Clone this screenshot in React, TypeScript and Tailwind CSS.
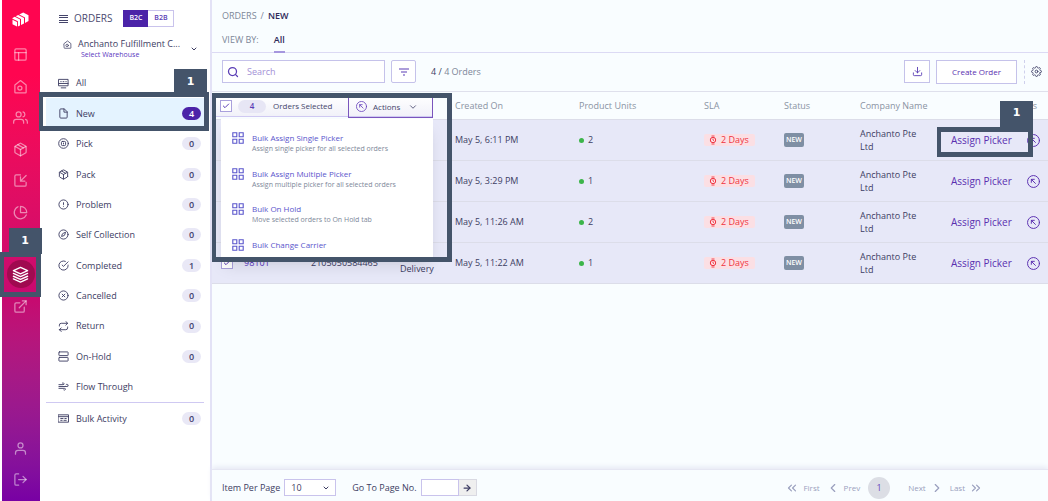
import React from 'react';
import {
  ArrowRight,
  Check,
  ChevronDown,
  ChevronLeft,
  ChevronRight,
  ChevronsLeft,
  ChevronsRight,
  CircleX,
  Compass,
  Search,
  Wind,
} from 'lucide-react';
import {
  FiAlertCircle,
  FiCheckCircle,
  FiDownload,
  FiExternalLink,
  FiFile,
  FiLayout,
  FiLogOut,
  FiPackage,
  FiPieChart,
  FiRepeat,
  FiSettings,
  FiUser,
  FiUsers,
} from 'react-icons/fi';

type IconProps = { className?: string };

const svgProps = {
  viewBox: '0 0 24 24',
  fill: 'none',
  stroke: 'currentColor',
  strokeWidth: 2,
  strokeLinecap: 'round' as const,
  strokeLinejoin: 'round' as const,
};

const LogoIcon = ({ className }: IconProps) => (
  <svg className={className} viewBox="0 0 17 17" fill="#fff">
    <path d="M.5 6.900 2.800 5.800 8 8.400V14.400L5.900 15.600V10.200L.5 7.700ZM.5 8.800 5 10.900V15.600L.5 13.300Z" />
    <path d="M3.700 5.300 6.200 4.100 12 7V12.400L9 14V8Z" />
    <path d="M7.200 3.600 11.200 1.600 16.500 4.300V10L13 11.900V6.500Z" />
  </svg>
);

const HouseIcon = ({ className }: IconProps) => (
  <svg className={className} {...svgProps}>
    <path d="M3 9.500 12 2.500l9 7V21a1 1 0 0 1-1 1H4a1 1 0 0 1-1-1Z" />
    <circle cx="11" cy="14.500" r="3.300" />
  </svg>
);

const InboundIcon = ({ className }: IconProps) => (
  <svg className={className} {...svgProps}>
    <path d="M12 3H5a2 2 0 0 0-2 2v14a2 2 0 0 0 2 2h14a2 2 0 0 0 2-2v-4M21 4l-9 9M12 6v7h7" />
  </svg>
);

const LayersIcon = ({ className }: IconProps) => (
  <svg className={className} {...svgProps}>
    <path d="m12 2 10 4.500-10 4.500L2 6.500ZM2 10.500 12 15l10-4.500M2 14.500 12 19l10-4.500M2 18.200l10 4.500 10-4.500" />
  </svg>
);

const ScreenIcon = ({ className }: IconProps) => (
  <svg className={className} {...svgProps}>
    <path d="M2 3h20v14H2ZM6 8h1M11 8h2M17 8h1M2 12h20M7 21.500h10" />
  </svg>
);

const PickIcon = ({ className }: IconProps) => (
  <svg className={className} {...svgProps}>
    <circle cx="12" cy="12" r="10.500" />
    <rect x="7.500" y="7.500" width="9" height="9" rx="2" />
    <path d="M12 11v2" />
  </svg>
);

const HoldIcon = ({ className }: IconProps) => (
  <svg className={className} {...svgProps}>
    <rect x="2" y="2" width="20" height="8" rx="1" />
    <rect x="2" y="14" width="20" height="8" rx="1" />
  </svg>
);

const BulkIcon = ({ className }: IconProps) => (
  <svg className={className} {...svgProps}>
    <path d="M1 4h22v16H1ZM1 8h22M6 12h5M15 12h3M6 16h3M13 16h5" />
  </svg>
);

const GridIcon = ({ className }: IconProps) => (
  <svg className={className} viewBox="0 0 12 12" fill="none" stroke="currentColor" strokeWidth="1.100">
    <path d="M.8.800h4v4h-4ZM7.200.800h4v4h-4ZM.8 7.200h4v4h-4ZM7.200 7.200h4v4h-4Z" />
  </svg>
);

const ActionIcon = ({ className }: IconProps) => (
  <svg className={className} {...svgProps} strokeWidth="1.800">
    <circle cx="12" cy="12" r="11" />
    <path d="M8 13.500V8h5.500M8 8l7.500 7.500" />
  </svg>
);

const ClockIcon = ({ className }: IconProps) => (
  <svg className={className} viewBox="0 0 8 10" fill="none" stroke="currentColor">
    <circle cx="4" cy="5" r="2.700" />
    <path d="M4 3.500V5l1 .7M2.500 1h3M2.500 9h3" strokeWidth=".9" />
  </svg>
);

const FilterIcon = ({ className }: IconProps) => (
  <svg className={className} viewBox="0 0 10 8" stroke="currentColor" strokeWidth="1.200">
    <path d="M0 1h10M2 4h6M4 7h2" />
  </svg>
);

const railItems = [
  { label: 'Dashboard', icon: FiLayout },
  { label: 'Warehouse', icon: HouseIcon },
  { label: 'Customers', icon: FiUsers },
  { label: 'Products', icon: FiPackage },
  { label: 'Inbound', icon: InboundIcon },
  { label: 'Reports', icon: FiPieChart },
];

const tabs = [
  { label: 'All', icon: ScreenIcon },
  { label: 'New', icon: FiFile, count: 4, active: true },
  { label: 'Pick', icon: PickIcon, count: 0 },
  { label: 'Pack', icon: FiPackage, count: 0 },
  { label: 'Problem', icon: FiAlertCircle, count: 0 },
  { label: 'Self Collection', icon: Compass, count: 0 },
  { label: 'Completed', icon: FiCheckCircle, count: 1 },
  { label: 'Cancelled', icon: CircleX, count: 0 },
  { label: 'Return', icon: FiRepeat, count: 0 },
  { label: 'On-Hold', icon: HoldIcon, count: 0 },
  { label: 'Flow Through', icon: Wind },
];

const bulkActions = [
  { title: 'Bulk Assign Single Picker', text: 'Assign single picker for all selected orders' },
  { title: 'Bulk Assign Multiple Picker', text: 'Assign multiple picker for all selected orders' },
  { title: 'Bulk On Hold', text: 'Move selected orders to On Hold tab' },
  { title: 'Bulk Change Carrier' },
];

const orders = [
  { created: 'May 5, 6:11 PM', units: 2 },
  { created: 'May 5, 3:29 PM', units: 1 },
  { created: 'May 5, 11:26 AM', units: 2 },
  { id: '98101', tracking: '2105050584465', type: 'Delivery', created: 'May 5, 11:22 AM', units: 1 },
];

const Step = ({ className }: IconProps) => (
  <span
    className={`absolute z-30 flex h-[26px] w-[33px] items-center justify-center bg-[#44546a] font-['DejaVu_Sans',sans-serif] text-[11px] font-bold text-white ${className}`}
  >
    1
  </span>
);

const Frame = ({ className }: IconProps) => (
  <span className={`pointer-events-none absolute z-20 border-[5px] border-l-4 border-[#44546a] ${className}`} />
);

const Tick = ({ label }: { label: string }) => (
  <span className="relative flex size-3 shrink-0">
    <input
      type="checkbox"
      defaultChecked
      aria-label={label}
      className="size-3 appearance-none border border-[#a9a0dc] bg-white"
    />
    <Check className="pointer-events-none absolute left-0.5 top-0.5 size-2 text-[#5a3db5]" strokeWidth={3} />
  </span>
);

const Count = ({ value, active }: { value: number; active?: boolean }) => (
  <span
    className={`flex h-[13px] w-[19px] items-center justify-center rounded-full font-semibold ${
      active ? 'bg-[#4b23a8] text-white' : 'bg-[#e9e8f6] text-[#41416e]'
    }`}
  >
    {value}
  </span>
);

const Rail = () => (
  <nav className="ml-0.5 flex w-[38px] shrink-0 flex-col items-center bg-linear-to-b from-[#ff0550] from-15% via-[#c60a70] via-60% to-[#7800a4] pb-3.5 pr-px">
    <a href="#" aria-label="Home" className="flex h-[39px] items-center">
      <LogoIcon className="size-[17px]" />
    </a>
    {railItems.map(({ label, icon: Icon }) => (
      <a key={label} href="#" aria-label={label} className="flex h-8 items-center text-white/50 even:h-[31px]">
        <Icon className="size-[15px]" />
      </a>
    ))}
    <a
      href="#"
      aria-label="Orders"
      className="relative mt-8 flex size-7 items-center justify-center rounded-full bg-[#a00a50] text-white"
    >
      <LayersIcon className="size-[17px]" />
      <Frame className="-left-[7px] -top-2 h-[45px] w-[41px]" />
      <Step className="-top-8 left-0.5" />
    </a>
    <a href="#" aria-label="Open store" className="flex h-9 items-center text-white/50">
      <FiExternalLink className="size-[15px]" />
    </a>
    <div className="mt-auto flex flex-col gap-4 text-white/50">
      <a href="#" aria-label="Profile"><FiUser className="size-[15px]" /></a>
      <a href="#" aria-label="Log out"><FiLogOut className="size-[15px]" /></a>
    </div>
  </nav>
);

const Sidebar = () => (
  <aside className="w-[172px] shrink-0 border-r-2 border-[#e3e2f6] px-1.5 text-[9px] text-[#3d3d63]">
    <div className="flex h-[37px] items-center pl-[13px]">
      <svg className="mr-1.5 h-2.5 w-[9px]" viewBox="0 0 9 10" stroke="#44446a">
        <path d="M0 1.500h9M0 3.500h9M0 6.500h9M0 8.500h9" />
      </svg>
      <h1 className="text-[10px] text-[#4b4b70]">ORDERS</h1>
      <div className="ml-[11px] flex h-[17px] w-[51px] border border-[#c9c3ec] text-[7px] font-semibold">
        <button className="-my-px -ml-px flex-1 bg-[#4b23a8] text-white">B2C</button>
        <button className="flex-1 text-[#5a3db5]">B2B</button>
      </div>
    </div>
    <button className="flex h-[31px] w-full items-start pl-[17px] text-left">
      <HouseIcon className="mr-1.5 mt-[3px] size-[9px]" />
      <span className="flex-1 leading-[14px]">
        {'Anchanto Fulfillment C...'}
        <span className="block pl-[3px] text-[7px] leading-2 text-[#5a35c0]">Select Warehouse</span>
      </span>
      <ChevronDown className="mr-1.5 mt-2 size-2" strokeWidth={3} />
    </button>
    <ul className="grid h-[334px] auto-rows-fr">
      {tabs.map(({ label, icon: Icon, count, active }) => (
        <li key={label} className={active ? 'relative bg-[#e4f3ff]' : ''}>
          <a href="#" className="flex h-full items-center pl-3 pr-[3px]">
            <Icon className="mr-[7px] size-[11px]" />
            <span className="flex-1">{label}</span>
            {count !== undefined && <Count value={count} active={active} />}
          </a>
          {active && (
            <>
              <Frame className="-left-[7px] -top-1.5 h-[39px] w-[170px]" />
              <Step className="-top-[29px] right-[-3px]" />
            </>
          )}
        </li>
      ))}
    </ul>
    <a href="#" className="flex h-8 items-center border-t border-[#cfc9f2] pl-3 pr-[3px]">
      <BulkIcon className="mr-[7px] size-[11px]" />
      <span className="flex-1">Bulk Activity</span>
      <Count value={0} />
    </a>
  </aside>
);

const Toolbar = () => (
  <div className="flex h-[39px] items-center border-b border-[#dfe0ec] pb-px pl-2.5 pr-1.5">
    <label className="flex h-[23px] w-[163px] items-center border border-[#c5c2ea] bg-white pl-1">
      <Search className="size-3 shrink-0 text-[#5a3db5]" strokeWidth={2.5} />
      <input
        type="search"
        aria-label="Search"
        placeholder="Search"
        className="ml-2 w-full outline-none placeholder:text-[#a391d6]"
      />
    </label>
    <button
      aria-label="Filter"
      className="ml-1.5 flex h-[23px] w-[25px] items-center justify-center rounded-xs border border-[#c5c2ea] bg-white"
    >
      <FilterIcon className="h-2 w-2.5 text-[#5a3db5]" />
    </button>
    <p className="ml-[15px] text-[#7d8799]">
      <span className="text-[#3d3d63]">4 /</span> 4 Orders
    </p>
    <button
      aria-label="Download"
      className="ml-auto flex h-[23px] w-[26px] items-center justify-center border border-[#c5c2ea] bg-white text-[#5a3db5]"
    >
      <FiDownload className="size-[11px]" />
    </button>
    <button className="ml-1.5 h-6 w-[81px] border border-[#c5c2ea] bg-white text-[8px] font-medium text-[#5a2fb0]">
      Create Order
    </button>
    <span className="ml-[7px] h-6 border-l border-dashed border-[#cfd0ec]" />
    <button aria-label="Settings" className="ml-1.5 text-[#44446a]">
      <FiSettings className="size-[11px]" />
    </button>
  </div>
);

const SelectionBar = () => (
  <div className="relative h-[27px] pl-1 pt-1">
    <div className="flex h-[21px] w-[217px] items-center border-b border-[#cfc9f2] bg-linear-to-b from-white to-[#f1f1f9] text-[8px] font-medium text-[#44446a]">
      <span className="pl-1"><Tick label="Select all orders" /></span>
      <span className="ml-1.5 flex h-[13px] w-7 items-center justify-center rounded-full bg-[#e7e6f5] font-semibold text-[#5a3db5]">
        4
      </span>
      <span className="ml-[7px]">Orders Selected</span>
      <button className="-mb-px ml-auto flex h-[22px] w-[85px] items-center border border-[#7a55bd] pl-[7px]">
        <ActionIcon className="mr-1.5 size-[11px] text-[#6a45bd]" />
        Actions
        <ChevronDown className="ml-2 size-2.5" />
      </button>
    </div>
    <ul className="absolute left-[9px] top-[27px] z-10 h-[140px] w-[212px] bg-white pt-3 shadow-lg">
      {bulkActions.map(({ title, text }) => (
        <li key={title} className="h-[35px] odd:h-9">
          <button className="flex w-full pl-[11px] text-left">
            <GridIcon className="mr-2 mt-px size-3 shrink-0 text-[#5a55cc]" />
            <span className="text-[8px] font-medium leading-[14px] text-[#5a55cc]">
              {title}
              {text && <span className="block text-[7px] font-normal leading-2 text-[#7d8799]">{text}</span>}
            </span>
          </button>
        </li>
      ))}
    </ul>
    <Frame className="left-0 top-px h-[169px] w-60" />
  </div>
);

const OrdersTable = () => (
  <table className="w-full table-fixed text-left">
    <colgroup>
      <col className="w-8" />
      <col className="w-[67px]" />
      <col className="w-[89px]" />
      <col className="w-[55px]" />
      <col className="w-[124px]" />
      <col className="w-[125px]" />
      <col className="w-20" />
      <col className="w-[76px]" />
      <col className="w-[91px]" />
      <col />
    </colgroup>
    <thead>
      <tr className="h-[27px] text-[#8a93a3] *:p-0 *:font-normal">
        <th colSpan={4}><SelectionBar /></th>
        <th>Created On</th>
        <th>Product Units</th>
        <th>SLA</th>
        <th>Status</th>
        <th>Company Name</th>
        <th><span className="block pr-[11px] text-right">Actions</span></th>
      </tr>
    </thead>
    <tbody>
      {orders.map((order, index) => (
        <tr key={order.created} className="h-[41px] border-t border-[#dcdde9] bg-[#e7e8f8] last:border-b *:p-0">
          <td><span className="flex pl-[9px]"><Tick label={`Select order ${index + 1}`} /></span></td>
          <td>{order.id && <a href="#" className="text-[#5a35c0]">{order.id}</a>}</td>
          <td>{order.tracking}</td>
          <td><span className="block pt-3">{order.type}</span></td>
          <td>{order.created}</td>
          <td>
            <span className="flex items-center gap-1">
              <span className="size-[5px] rounded-full bg-[#3cb54a]" />
              {order.units}
            </span>
          </td>
          <td>
            <span className="flex h-3 w-[51px] items-center rounded-xs bg-[#fbdfe4] pl-[5px] text-[#f03340]">
              <ClockIcon className="mr-1 h-2.5 w-2" />
              2 Days
            </span>
          </td>
          <td>
            <span className="flex h-3.5 w-5 items-center justify-center rounded-xs bg-[#7f8fa4] text-[7px] font-semibold text-white">
              NEW
            </span>
          </td>
          <td className="leading-[13px]"><span className="block w-[60px]">Anchanto Pte Ltd</span></td>
          <td>
            <div className="relative flex items-center justify-between pr-2 text-[#5a2fb0]">
              <button className="text-[10px]">Assign Picker</button>
              <button aria-label="More actions"><ActionIcon className="block size-[13px]" /></button>
              {index === 0 && (
                <>
                  <Frame className="-left-[14px] -top-1.5 h-[30px] w-24" />
                  <Step className="-top-8 left-[49px]" />
                </>
              )}
            </div>
          </td>
        </tr>
      ))}
    </tbody>
  </table>
);

const Footer = () => (
  <footer className="mt-auto flex h-8 items-center border-t border-[#e6e7f3] pl-2.5 pr-[65px] pt-1 shadow-[0_-2px_5px_#e6e8f4]">
    <label htmlFor="per-page" className="mr-1">Item Per Page</label>
    <span className="relative">
      <select
        id="per-page"
        className="block h-[17px] w-[52px] appearance-none border border-[#c9c3ec] bg-white pl-1.5 text-[9px]"
      >
        <option>10</option>
      </select>
      <ChevronDown className="pointer-events-none absolute right-1.5 top-[5px] size-2" strokeWidth={3} />
    </span>
    <label htmlFor="page-no" className="ml-4 mr-1">Go To Page No.</label>
    <input id="page-no" className="h-[17px] w-[38px] border border-[#c9c3ec] bg-white px-1" />
    <button
      aria-label="Go"
      className="flex h-[17px] w-[18px] items-center justify-center border border-l-0 border-[#d9d9e2] bg-[#efefef]"
    >
      <ArrowRight className="size-2.5" strokeWidth={3} />
    </button>
    <nav className="ml-auto flex items-center text-[8px] text-[#9a9fbe]">
      <a href="#" className="flex items-center gap-1"><ChevronsLeft className="size-3.5" />First</a>
      <a href="#" className="ml-1.5 flex items-center gap-1"><ChevronLeft className="size-3.5" />Prev</a>
      <a
        href="#"
        className="ml-2 mr-[18px] flex size-[22px] items-center justify-center rounded-full bg-[#dcdee5] text-[9px] text-[#6a45bd]"
      >
        1
      </a>
      <a href="#" className="flex items-center gap-1">Next<ChevronRight className="size-3.5" /></a>
      <a href="#" className="ml-1.5 flex items-center gap-1">Last<ChevronsRight className="size-3.5" /></a>
    </nav>
  </footer>
);

const App: React.FC = () => {
  return (
    <div className="flex min-h-screen overflow-hidden bg-white font-['Open_Sans',sans-serif]">
      <Rail />
      <Sidebar />
      <main className="flex min-w-0 flex-1 flex-col bg-[#f9fdff] text-[9px] text-[#3d3d63]">
        <header className="flex h-[53px] flex-col border-b border-[#dcdaf4] pl-2.5 text-[#7d8799]">
          <p className="flex h-8 items-center gap-1 font-medium">
            <a href="#">ORDERS</a> / <span className="font-semibold text-[#2f2a5a]">NEW</span>
          </p>
          <div className="flex flex-1 gap-[15px] leading-4">
            VIEW BY:
            <a href="#" className="-mb-px border-b-2 border-[#a596de] font-semibold text-[#2f2a5a]">All</a>
          </div>
        </header>
        <Toolbar />
        <OrdersTable />
        <Footer />
      </main>
    </div>
  );
};

export default App;
